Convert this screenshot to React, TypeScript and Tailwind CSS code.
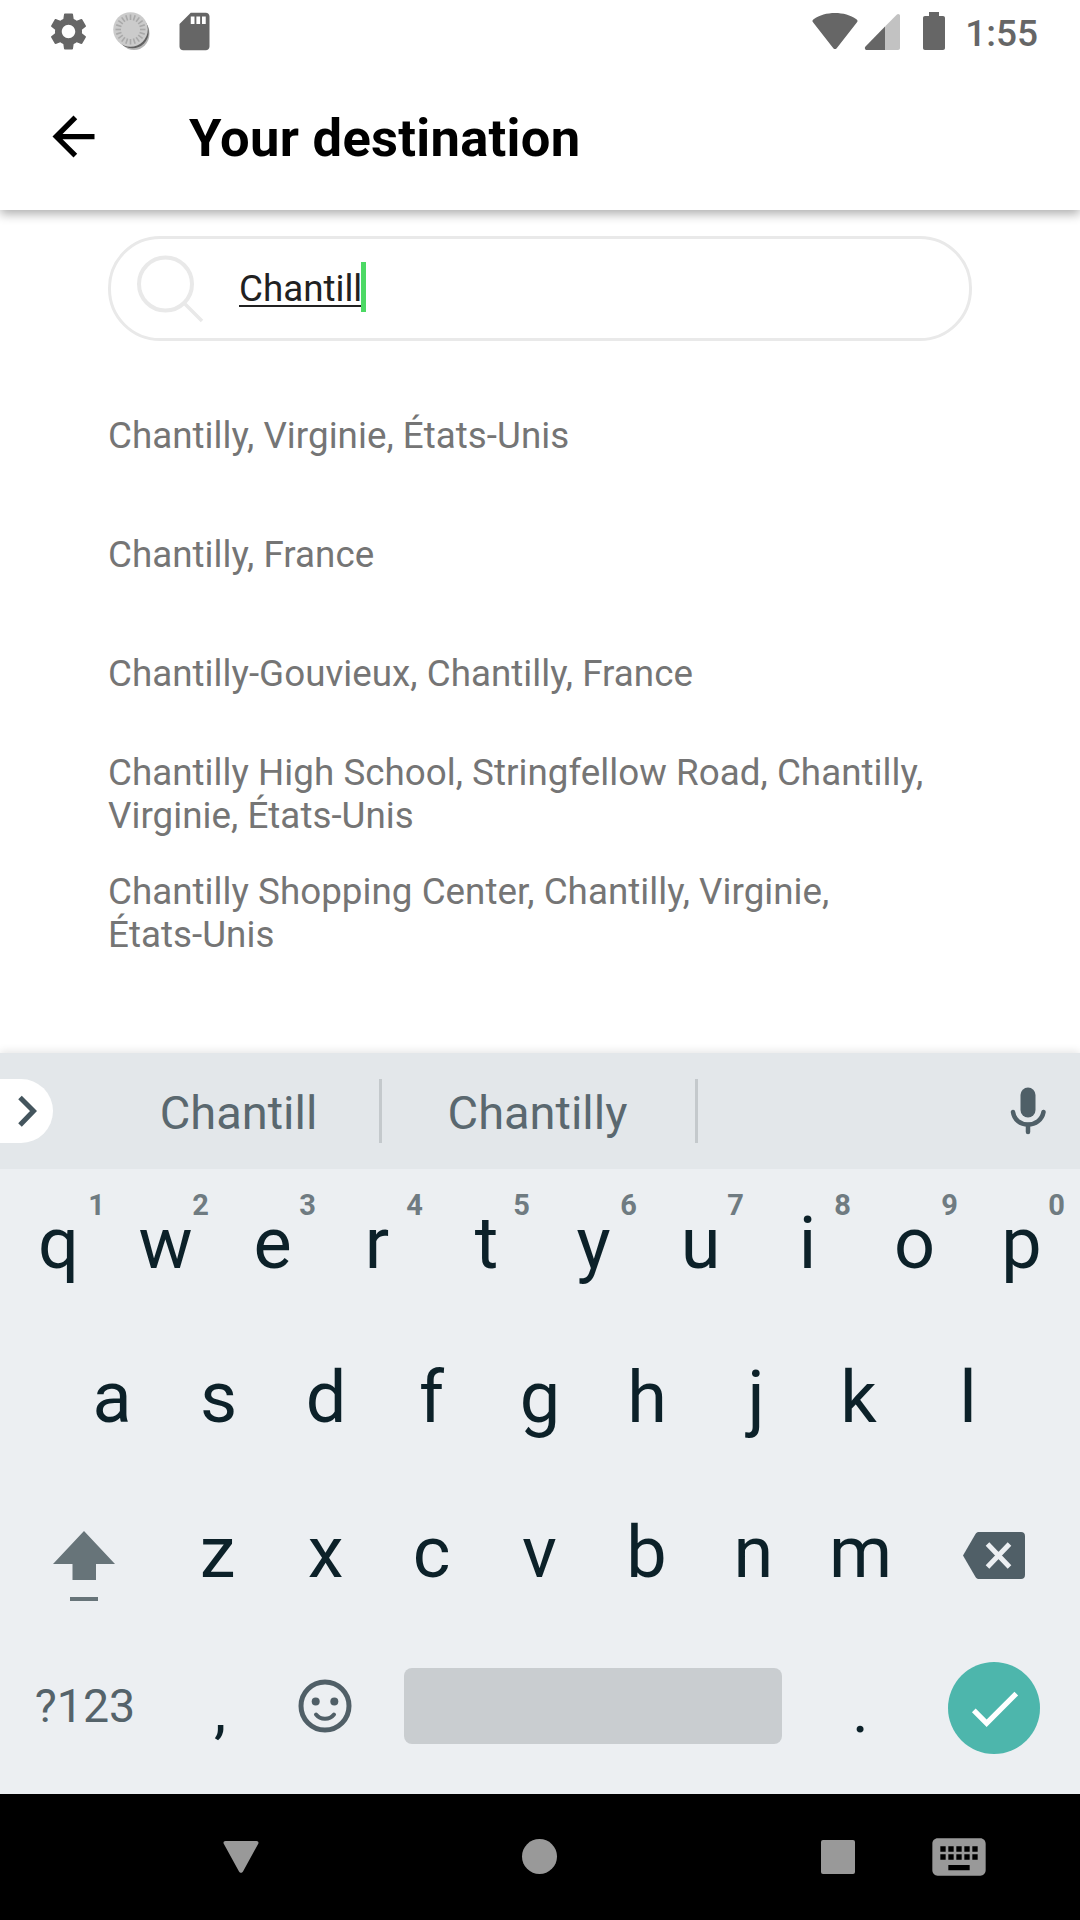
import React from 'react';
import { MdArrowBack, MdCheck, MdKeyboard, MdSdCard, MdSettings } from 'react-icons/md';

const suggestions = [
    'Chantilly, Virginie, États-Unis',
    'Chantilly, France',
    'Chantilly-Gouvieux, Chantilly, France',
    'Chantilly High School, Stringfellow Road, Chantilly,\nVirginie, États-Unis',
    'Chantilly Shopping Center, Chantilly, Virginie,\nÉtats-Unis',
];

const topRow = [
    { letter: 'q', hint: '1' },
    { letter: 'w', hint: '2' },
    { letter: 'e', hint: '3' },
    { letter: 'r', hint: '4' },
    { letter: 't', hint: '5' },
    { letter: 'y', hint: '6' },
    { letter: 'u', hint: '7' },
    { letter: 'i', hint: '8' },
    { letter: 'o', hint: '9' },
    { letter: 'p', hint: '0' },
];
const middleRow = ['a', 's', 'd', 'f', 'g', 'h', 'j', 'k', 'l'];
const bottomRow = ['z', 'x', 'c', 'v', 'b', 'n', 'm'];

// Optical centering for letters with uneven side bearings
const nudge: Record<string, string> = {
    r: 'pr-[5px]',
    k: 'pr-[5px]',
    f: 'pr-[3px]',
    j: 'pl-[4px]',
    c: 'pr-[2px]',
    z: 'pr-[2px]',
    s: 'pr-[1px]',
};

interface KeyProps {
    letter: string;
    hint?: string;
}

const Key: React.FC<KeyProps> = ({ letter, hint }) => (
    <div className={`relative w-[107px] h-full flex items-center justify-center text-[72px] leading-none ${nudge[letter] ?? ''}`}>
        {letter}
        {hint && (
            <span className={`absolute top-[21px] w-[23px] text-center text-[29px] leading-[30px] font-bold text-[#6f7b81] ${hint === '1' ? 'right-[4px]' : 'right-[7px]'}`}>
                {hint}
            </span>
        )}
    </div>
);

const TICKS = Array.from({ length: 20 }, (_, i) => i * 18);

const StatusBar = () => (
    <div className="h-[63px] flex items-start justify-between pl-[46px] pr-[42px] text-[#666666]">
        <div className="flex items-center gap-[18px] pt-[9px]">
            <MdSettings className="w-[45px] h-[45px]" />
            <svg className="w-[45px] h-[45px]" viewBox="0 0 45 45">
                <ellipse cx="25" cy="24.500" rx="15.500" ry="16.500" fill="#b5b5b5" />
                <ellipse cx="23.400" cy="22.800" rx="16.300" ry="16.500" fill="#606060" />
                <circle cx="21.500" cy="20.500" r="17.300" fill="#cbcbcb" />
                <g stroke="#a9a9a9" strokeWidth="1.600">
                    {TICKS.map(angle => (
                        <path key={angle} d="M21.500 5.500v5.500" transform={`rotate(${angle} 21.5 20.5)`} />
                    ))}
                </g>
            </svg>
            <MdSdCard className="w-[45px] h-[45px]" />
        </div>
        <div className="flex items-start">
            <svg className="w-[134px] h-[40px] mt-[11px]" viewBox="0 0 134 40" fill="currentColor">
                <path d="M2.600 8.200C8.500 4 16 2 24 2s15.500 2 21.400 6.200c1.300.9 1.500 2 .6 3.100L25.700 37.200c-1 1.200-2.400 1.200-3.400 0L2 11.300c-.9-1.100-.7-2.200.6-3.100z" />
                <path d="M85.700 3.700c1.300-1.200 3.300-.6 3.300 1.300v32c0 1.200-.8 2-2 2H74V15.600z" opacity=".4" />
                <path d="M74 15.400V39H55.800c-1.800 0-2.600-2-1.300-3.500z" />
                <path d="M118 1h10v4h4c1.200 0 2 .8 2 2v30c0 1.200-.8 2-2 2h-18c-1.200 0-2-.8-2-2V7c0-1.200.8-2 2-2h4z" />
            </svg>
            <span className="pl-[20px] pt-[12px] text-[37px] leading-[43px] font-medium">1:55</span>
        </div>
    </div>
);

const SearchField = () => (
    <div className="mx-[108px] mt-[26px] h-[105px] rounded-[52px] border-[3px] border-[#e9e9e9] flex items-center pl-[25px]">
        <svg className="w-[70px] h-[70px]" viewBox="0 0 70 70" fill="none" stroke="#e9e9e9" strokeWidth="4">
            <circle cx="29.500" cy="30" r="26.500" />
            <path d="M48 49l18 18" strokeWidth="3.500" />
        </svg>
        <div className="relative ml-[33px] text-[36.75px] leading-[50px] text-[#212121]">
            Chantill
            <span className="absolute left-0 right-0 bottom-[7px] h-[2px] bg-[#212121]" />
            <span className="absolute -right-[4px] -top-[2px] w-[5px] h-[50px] bg-[#4cd964]" />
        </div>
    </div>
);

const SuggestionStrip = () => (
    <div className="h-[116px] bg-[#e3e7ea] flex items-center text-[47px] text-[#5a686f]">
        <div className="w-[53px] h-[64px] rounded-r-full bg-white flex items-center">
            <svg className="w-[53px] h-[64px]" viewBox="0 0 53 64" fill="none" stroke="#44555d" strokeWidth="5">
                <path d="M20 18.500l13.500 13.500L20 46" />
            </svg>
        </div>
        <div className="w-[326px] pl-[45px] pt-[5px] text-center">Chantill</div>
        <div className="w-[3px] h-[64px] bg-[#c4c9cc]" />
        <div className="w-[313px] pt-[5px] pr-[2px] text-center">Chantilly</div>
        <div className="w-[3px] h-[64px] bg-[#c4c9cc]" />
        <svg className="w-[36px] h-[48px] ml-auto mr-[34px]" viewBox="0 0 36 48" fill="none" stroke="#4f5f67" strokeWidth="4.500" strokeLinecap="round">
            <rect x="10.500" y="0.500" width="15" height="30" rx="7.500" fill="#4f5f67" stroke="none" />
            <path d="M3 25c1 8 7.500 12.500 15 12.500S32 33 33.500 25" />
            <path d="M18 38v7" />
        </svg>
    </div>
);

const Keyboard = () => (
    <div className="bg-[#eceff2] shadow-[0_-2px_8px_rgba(0,0,0,0.1)] text-[#0c2129]">
        <SuggestionStrip />
        <div className="h-[151px] pb-[2px] px-[5px] flex">
            {topRow.map(key => (
                <Key key={key.letter} letter={key.letter} hint={key.hint} />
            ))}
        </div>
        <div className="h-[154px] pt-[2px] flex justify-center">
            {middleRow.map(letter => (
                <Key key={letter} letter={letter} />
            ))}
        </div>
        <div className="h-[155px] pt-[2px] flex items-center">
            <div className="w-[165px] flex justify-center">
                <svg className="w-[64px] h-[72px] mt-[26px] ml-[3px]" viewBox="0 0 64 72" fill="#677479">
                    <path d="M32 1l31 33H44v16H20.500V34H1z" />
                    <path d="M18 67h28v4H18z" />
                </svg>
            </div>
            {bottomRow.map(letter => (
                <Key key={letter} letter={letter} />
            ))}
            <svg className="w-[64px] h-[48px] ml-[48px] mt-[6px]" viewBox="0 0 64 48">
                <path d="M17 0h42c2.500 0 4 1.500 4 4v39c0 2.500-1.500 4-4 4H17c-1.500 0-2.500-.6-3.500-2L1 23.500 13.500 2C14.500.6 15.500 0 17 0z" fill="#505f67" />
                <path d="M25.500 12l22 23M47.500 12l-22 23" stroke="#eceff2" strokeWidth="5" />
            </svg>
        </div>
        <div className="h-[165px] pb-[11px] flex items-center">
            <div className="w-[165px] pl-[5px] pt-[2px] text-center text-[46.5px] text-[#55636a]">?123</div>
            <div className="w-[107px] pt-[9px] pl-[3px] text-center text-[62px] leading-none">,</div>
            <div className="w-[107px] pr-[1px] flex justify-center">
                <svg className="w-[56px] h-[56px]" viewBox="0 0 56 56" fill="none" stroke="#505f67" strokeWidth="5">
                    <circle cx="28" cy="28" r="24" />
                    <circle cx="18.700" cy="23.500" r="4" fill="#505f67" stroke="none" />
                    <circle cx="37.300" cy="23.500" r="4" fill="#505f67" stroke="none" />
                    <path d="M19 36.500c4.500 5.700 13.500 5.700 18 0" strokeWidth="4" strokeLinecap="round" />
                </svg>
            </div>
            <div className="ml-[25px] w-[378px] h-[76px] rounded-[8px] bg-[#c9cdd0]" />
            <div className="ml-[25px] w-[107px] pt-[9px] text-center text-[62px] leading-none">.</div>
            <div className="ml-[34px] mt-[4px] w-[92px] h-[92px] rounded-full bg-[#4db6ac] flex items-center justify-center">
                <MdCheck className="w-[63px] h-[63px] text-white" />
            </div>
        </div>
    </div>
);

const NavBar = () => (
    <div className="h-[126px] bg-black flex items-center text-[#999999]">
        <svg className="ml-[223px] w-[36px] h-[34px]" viewBox="0 0 36 34" fill="currentColor">
            <path d="M2.500 1h31c1.800 0 2.500 1.500 1.600 3L20 31.500c-1 1.800-3 1.800-4 0L.9 4C0 2.500.7 1 2.500 1z" />
        </svg>
        <div className="ml-[263px] mb-[1px] w-[35px] h-[35px] rounded-full bg-[#999999]" />
        <div className="ml-[264px] w-[34px] h-[34px] rounded-[2px] bg-[#999999]" />
        <MdKeyboard className="ml-[72px] w-[64px] h-[64px]" />
    </div>
);

export default function App() {
    return (
        <div className="w-[1080px] h-[1920px] flex flex-col overflow-hidden bg-white font-[Roboto,sans-serif]">
            <header className="h-[210px] bg-white shadow-[0_4px_10px_rgba(0,0,0,0.32)]">
                <StatusBar />
                <div className="h-[147px] flex items-center pl-[42px]">
                    <MdArrowBack className="w-[63px] h-[63px] text-black" />
                    <h1 className="ml-[84px] pt-[3px] text-[52.5px] leading-[62px] tracking-[0.28px] font-bold text-black">Your destination</h1>
                </div>
            </header>

            <main className="flex-1">
                <SearchField />
                <ul className="mt-[35px] px-[108px]">
                    {suggestions.map(place => (
                        <li
                            key={place}
                            className={`h-[119px] flex items-center text-[36.75px] leading-[43px] tracking-[0.03px] whitespace-pre text-[#757575] ${place.includes('\n') ? 'pt-[2px]' : ''}`}
                        >
                            {place}
                        </li>
                    ))}
                </ul>
            </main>

            <Keyboard />
            <NavBar />
        </div>
    );
}
